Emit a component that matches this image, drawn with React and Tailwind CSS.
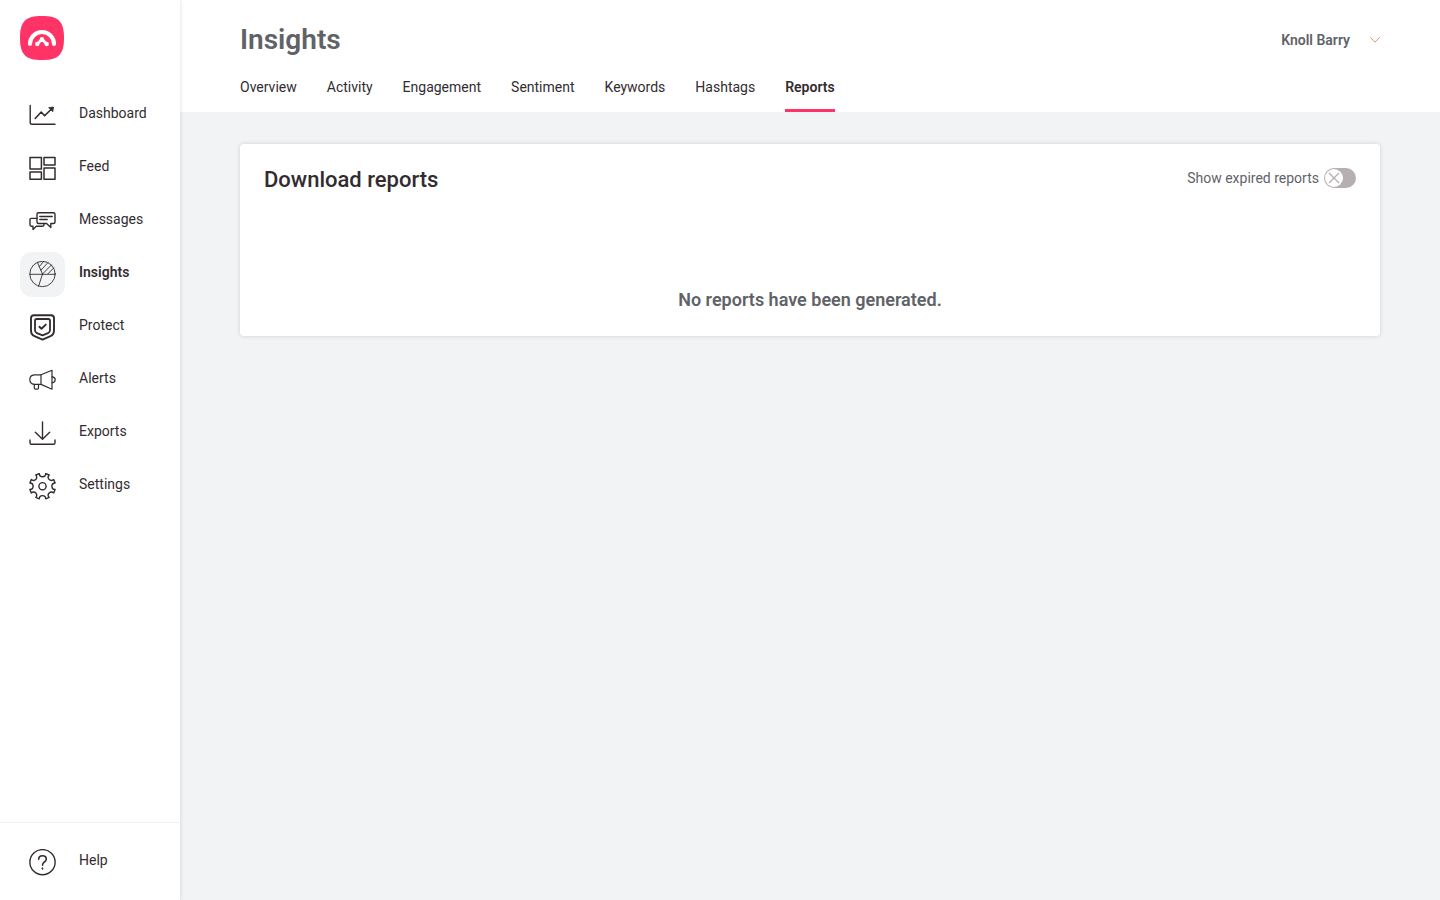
import React, { useState } from "react";

const Icon = ({ children, strokeWidth = 1.4 }) => (
  <svg
    width="27"
    height="27"
    viewBox="0 0 27 27"
    fill="none"
    stroke="currentColor"
    strokeWidth={strokeWidth}
    strokeLinecap="round"
    strokeLinejoin="round"
    aria-hidden="true"
  >
    {children}
  </svg>
);

const DashboardIcon = () => (
  <Icon>
    <path d="M1.2 3.5V20.5Q1.2 22.3 3 22.3H26" />
    <path d="M6.2 16.5L12.2 10L15.6 13.8L22.5 7" strokeWidth="1.6" />
    <path d="M20 5.6L24.5 5L23.8 9.4Z" fill="currentColor" strokeWidth="0.8" />
  </Icon>
);

const FeedIcon = () => (
  <Icon strokeWidth={1.5}>
    <rect x="1" y="2.6" width="11.4" height="11.3" />
    <rect x="15" y="2.6" width="11" height="7.3" />
    <rect x="1" y="17" width="11.4" height="7.2" />
    <rect x="15" y="13" width="11" height="11.2" />
  </Icon>
);

const MessagesIcon = () => (
  <Icon>
    <path d="M9.5 4.7H24.5Q26 4.7 26 6.2V14Q26 15.5 24.5 15.5H21.8V19.6L17.6 15.5H9.5Q8 15.5 8 14V6.2Q8 4.7 9.5 4.7Z" />
    <path d="M10.8 8.5H23.2M10.8 11.5H18.2" />
    <path d="M8 10.4H2.4Q1 10.4 1 11.8V16.8Q1 18.2 2.4 18.2H4V21.5L7.4 18.2H13.6Q15 18.2 15 16.8V15.5" />
  </Icon>
);

const InsightsIcon = () => (
  <Icon strokeWidth={0.9}>
    <circle cx="13.5" cy="13" r="12.7" />
    <path d="M0.8 13.3H26.2M13.5 13L8.4 1.4M13.5 13L9.6 25.2" />
    <path d="M10.2 5.6L14.2 1M11.8 9.3L18.8 1.8M13.6 12.9L22.4 4M18.8 12.9L25 6.8" />
  </Icon>
);

const ProtectIcon = () => (
  <Icon strokeWidth={1.9}>
    <path d="M5 1.2H22Q25 1.2 25 4V16.5Q25 20.5 21.5 22.2L13.5 25.6L5.5 22.2Q2 20.5 2 16.5V4Q2 1.2 5 1.2Z" />
    <path d="M7.8 5H19.2Q21 5 21 6.8V16.2Q21 18.2 19 19.2L13.5 21.4L8 19.2Q6 18.2 6 16.2V6.8Q6 5 7.8 5Z" strokeWidth="1.8" />
    <path d="M10.4 12.8L12.5 14.8L16.8 10.6" />
  </Icon>
);

const AlertsIcon = () => (
  <Icon strokeWidth={1.2}>
    <path d="M12 7.8L23 3.3V22.2L12 17.4Z" />
    <path d="M12 7.8H5.2Q0.8 8.2 0.8 12.6Q0.8 17 5.2 17.4H12" />
    <path d="M5.3 17.4V21Q5.3 22.2 6.5 22.2H8.3Q9.5 22.2 9.5 21V17.4" />
    <path d="M23 9.8Q26.2 10 26.2 12.8Q26.2 15.6 23 15.8" />
  </Icon>
);

const ExportsIcon = () => (
  <Icon>
    <path d="M13.5 2V19M6.3 12.3L13.5 19.3L20.7 12.3" />
    <path d="M1 20V22.8Q1 24.3 2.5 24.3H24.5Q26 24.3 26 22.8V20" />
  </Icon>
);

const SettingsIcon = () => (
  <Icon>
    <g transform="translate(13.5 13.2)">
      <path d="M12.6 3.2L11.2 6.7A3.1 3.1 0 0 0 6.7 11.2L3.2 12.6A3.2 3.2 0 0 0 -3.2 12.6L-6.7 11.2A3.1 3.1 0 0 0 -11.2 6.7L-12.6 3.2A3.2 3.2 0 0 0 -12.6 -3.2L-11.2 -6.7A3.1 3.1 0 0 0 -6.7 -11.2L-3.2 -12.6A3.2 3.2 0 0 0 3.2 -12.6L6.7 -11.2A3.1 3.1 0 0 0 11.2 -6.7L12.6 -3.2A3.2 3.2 0 0 0 12.6 3.2Z" />
      <circle r="3.6" />
    </g>
  </Icon>
);

const HelpIcon = () => (
  <Icon>
    <circle cx="13.5" cy="13.2" r="12.6" />
    <path d="M9.7 10.2Q9.7 6.7 13.5 6.7Q17.3 6.7 17.3 10Q17.3 11.8 15.4 13Q13.5 14.2 13.5 16.2" strokeWidth="1.6" />
    <path d="M13.5 19.2V19.8" strokeWidth="1.7" />
  </Icon>
);

const Logo = () => (
  <svg width="44" height="44" viewBox="0 0 44 44" fill="none" aria-hidden="true">
    <path
      d="M22 0C38.5 0 44 5.5 44 22C44 38.5 38.5 44 22 44C5.5 44 0 38.5 0 22C0 5.5 5.5 0 22 0Z"
      fill="#ff3366"
    />
    <path d="M10 28A12 12 0 0 1 34 28" stroke="#fff" strokeWidth="4" strokeLinecap="round" />
    <path d="M17.3 28L22 23.2L26.7 28" stroke="#fff" strokeWidth="2.8" strokeLinecap="round" strokeLinejoin="round" />
    <circle cx="17.3" cy="28" r="2.2" fill="#fff" />
    <circle cx="26.7" cy="28" r="2.2" fill="#fff" />
    <circle cx="22" cy="23.2" r="2.2" fill="#fff" />
  </svg>
);

const navItems = [
  { label: "Dashboard", icon: DashboardIcon },
  { label: "Feed", icon: FeedIcon },
  { label: "Messages", icon: MessagesIcon },
  { label: "Insights", icon: InsightsIcon },
  { label: "Protect", icon: ProtectIcon },
  { label: "Alerts", icon: AlertsIcon },
  { label: "Exports", icon: ExportsIcon },
  { label: "Settings", icon: SettingsIcon },
];

const tabs = ["Overview", "Activity", "Engagement", "Sentiment", "Keywords", "Hashtags", "Reports"];

const NavLink = ({ label, icon: ItemIcon, active }) => (
  <a href="#" className="flex items-center gap-[14px] text-[#322c30]">
    <span
      className={`flex size-[45px] items-center justify-center rounded-xl ${active ? "bg-[#f2f3f5]" : ""}`}
    >
      <ItemIcon />
    </span>
    <span className={`pb-[6px] text-sm ${active ? "font-semibold" : ""}`}>{label}</span>
  </a>
);

const Sidebar = () => (
  <aside className="z-10 flex w-[180px] shrink-0 flex-col bg-white shadow-[0_0_4px_rgba(0,0,0,0.15)]">
    <a href="#" aria-label="Home" className="ml-5 mt-4 w-11">
      <Logo />
    </a>
    <nav className="mt-[33px] flex flex-col gap-2 px-5">
      {navItems.map((item) => (
        <NavLink key={item.label} {...item} active={item.label === "Insights"} />
      ))}
    </nav>
    <div className="mt-auto border-t border-[#f2f3f5] px-5 pt-[17px] pb-[15px]">
      <NavLink label="Help" icon={HelpIcon} />
    </div>
  </aside>
);

const Header = () => (
  <header className="bg-white px-[60px] pt-5">
    <div className="flex h-10 items-center justify-between">
      <h1 className="text-[28px] font-semibold text-[#5f6368]">Insights</h1>
      <button type="button" className="flex items-center gap-5 text-sm font-semibold text-[#5f6368]">
        Knoll Barry
        <svg width="10" height="6" viewBox="0 0 10 6" fill="none" stroke="#d99a7a" aria-hidden="true">
          <path d="M0.3 0.3L5 5.2L9.7 0.3" />
        </svg>
      </button>
    </div>
    <nav className="flex h-[52px] gap-[30px] text-sm text-[#322c30]">
      {tabs.map((tab) => (
        <a
          key={tab}
          href="#"
          className={`border-b-3 pt-[17px] ${
            tab === "Reports" ? "border-[#ff3366] font-semibold" : "border-transparent"
          }`}
        >
          {tab}
        </a>
      ))}
    </nav>
  </header>
);

const App = () => {
  const [showExpired, setShowExpired] = useState(false);

  return (
    <div className="flex min-h-screen bg-[#f2f3f5] font-['Roboto',sans-serif]">
      <Sidebar />
      <div className="min-w-0 flex-1">
        <Header />
        <main className="px-[60px] py-8">
          <section className="rounded-sm bg-white p-6 shadow-[0_0_4px_rgba(0,0,0,0.15)]">
            <div className="flex items-start justify-between">
              <h2 className="text-[22px] leading-6 font-medium text-[#322c30]">Download reports</h2>
              <label className="flex items-center gap-[5px] text-sm text-[#5f6368]">
                Show expired reports
                <span className="relative flex">
                  <input
                    type="checkbox"
                    checked={showExpired}
                    onChange={(e) => setShowExpired(e.target.checked)}
                    className="h-5 w-8 appearance-none rounded-full bg-[#b5afb1] checked:bg-[#ff3366]"
                  />
                  <span
                    className={`pointer-events-none absolute top-px flex size-[18px] items-center justify-center rounded-full bg-white ${
                      showExpired ? "right-px" : "left-px"
                    }`}
                  >
                    <svg width="12" height="12" viewBox="0 0 12 12" stroke="#b5afb1" strokeWidth="1.3" aria-hidden="true">
                      <path d="M1 1L11 11M11 1L1 11" />
                    </svg>
                  </span>
                </span>
              </label>
            </div>
            <p className="mt-24 text-center text-lg leading-6 font-semibold text-[#5f6368]">
              No reports have been generated.
            </p>
          </section>
        </main>
      </div>
    </div>
  );
};

export default App;
